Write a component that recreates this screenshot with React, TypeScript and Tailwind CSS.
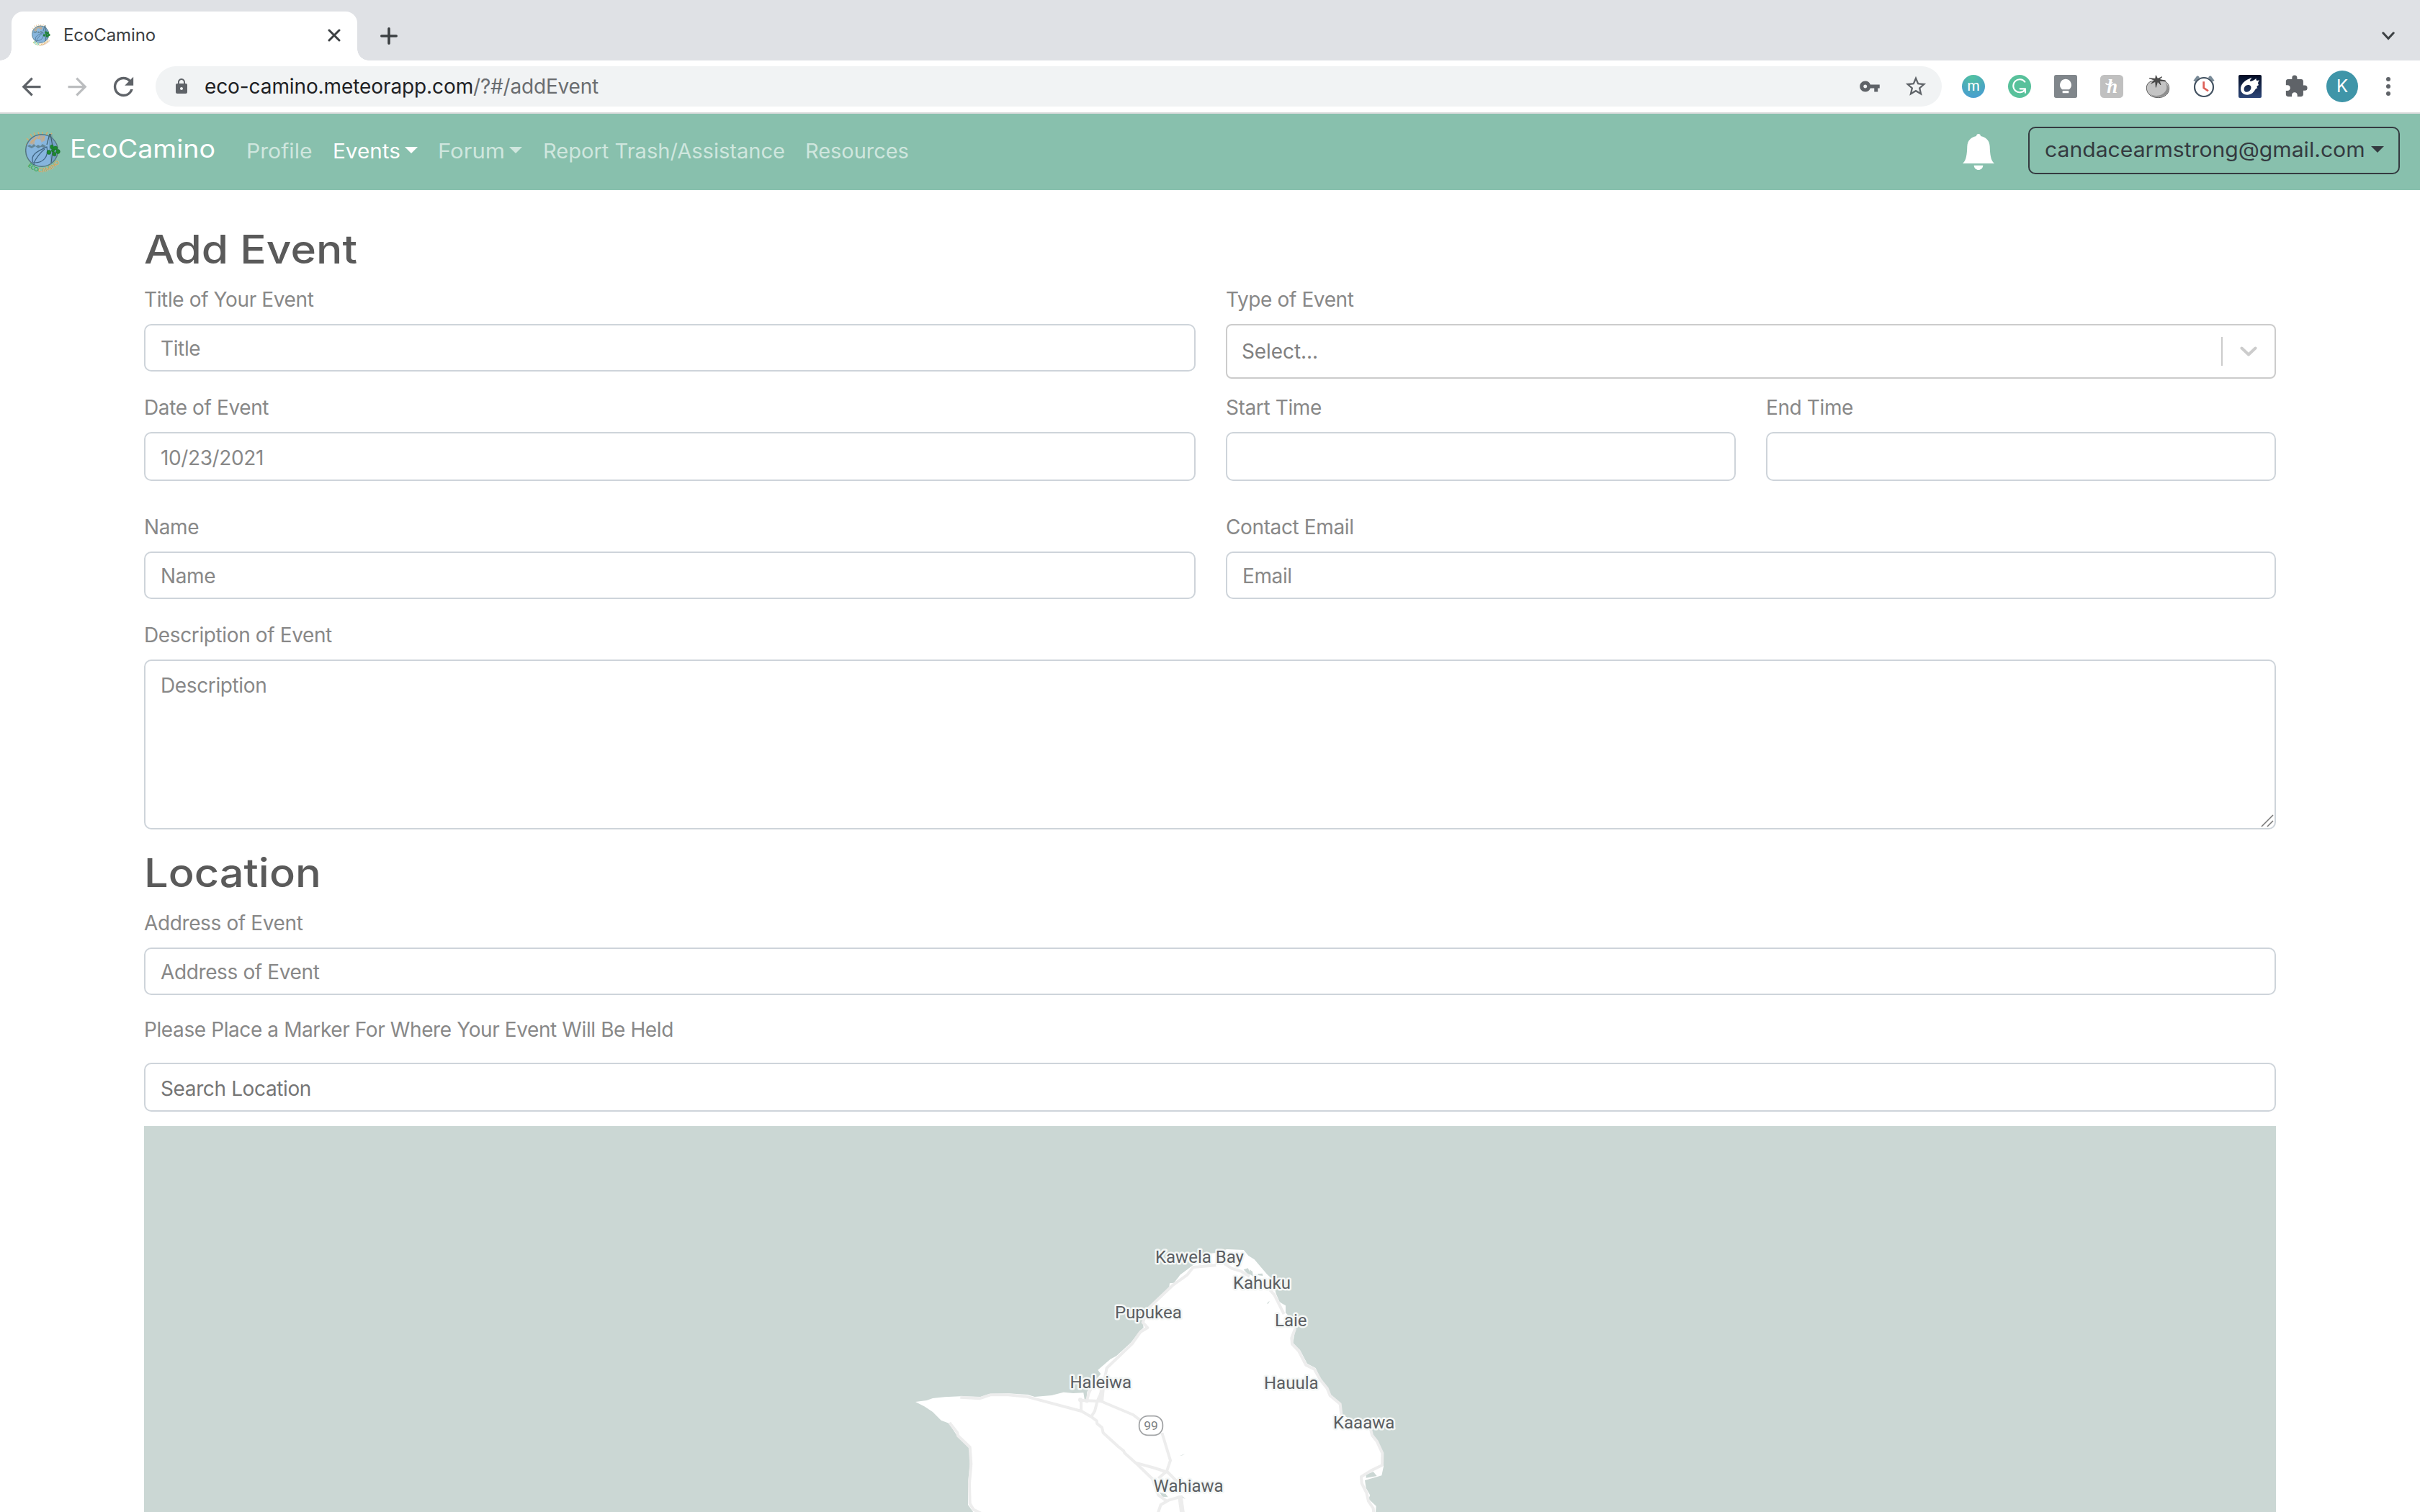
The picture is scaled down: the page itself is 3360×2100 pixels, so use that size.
import type { ReactNode } from "react";
import {
  MdArrowBack,
  MdArrowForward,
  MdExtension,
  MdLock,
  MdRefresh,
  MdStarBorder,
  MdVpnKey,
} from "react-icons/md";

function EcoLogo({ className, id }: { className: string; id: string }) {
  return (
    <svg viewBox="0 0 49 57" className={className}>
      <defs>
        <path id={id} d="M3 43 Q23 64 45 42" />
      </defs>
      <g stroke="#d9ab6c" strokeWidth="1.4">
        <path d="M4 19 L1 17 M6 13 L2 9 M10 8 L7 3 M14 6 L12 1 M19 4 L18 0 M24 4 L24 0 M29 4 L31 0 M34 6 L37 2" />
      </g>
      <circle cx="23" cy="26" r="22.3" fill="#86b5dd" stroke="#55777f" strokeWidth="1.5" />
      <path d="M5 17 Q10 5 24 5 Q28 6 28 12 L22 15 Q15 13 13 18 Z" fill="#b9ab9b" opacity=".85" />
      <path d="M8 15 L12 11 M12 16 L15 7 M18 12 L20 5 M24 11 L27 6" stroke="#d9ab6c" strokeWidth="1.2" />
      <circle cx="17.5" cy="15" r="5" fill="#8fbbe0" />
      <path
        d="M3 20 L6 18 L9 20 L12 17 L15 20 L18 18 L21 20 L24 17 L29 20 L26 22 L22 21 L18 23 L14 20 L9 23 Z"
        fill="#55777f"
        opacity=".75"
      />
      <path d="M33 3 L37 3 L45 26 L42 38 L36 44 L33 26 Z" fill="#5d86a8" opacity=".4" />
      <path d="M34 3 L30 18 M35 3 L38 20 M38 28 L36 43 M38 28 L42 34" stroke="#3f5f6b" strokeWidth="1.2" fill="none" />
      <path
        d="M11 43 C6 32 17 27 30 21 C33 36 24 43 13 43 M12 43 C16 35 20 30 27 24 M13 43 L11 46"
        stroke="#3f6482"
        strokeWidth="1.2"
        fill="none"
      />
      <g fill="#1c8a2c" stroke="#14651f" strokeWidth=".5">
        <ellipse cx="33" cy="28.5" rx="2.8" ry="3" />
        <ellipse cx="37" cy="21" rx="2.3" ry="3" />
        <ellipse cx="42" cy="22.5" rx="2.8" ry="2.6" />
        <ellipse cx="45.5" cy="27.5" rx="2.8" ry="3" />
        <ellipse cx="40.5" cy="31" rx="2.4" ry="2.8" />
        <ellipse cx="38.5" cy="26" rx="2.2" ry="2.2" />
      </g>
      <text fontFamily="Lato, sans-serif" fontWeight="700" fontSize="8" letterSpacing="-.3" dy="3">
        <textPath href={`#${id}`} startOffset="3">
          <tspan fill="#35a85b">ECO</tspan>
          <tspan fill="#d8a860">CAMINO</tspan>
        </textPath>
      </text>
    </svg>
  );
}

function TabStrip() {
  return (
    <div className="flex h-[84px] items-end bg-[#dfe1e5] pl-4">
      <div className="relative flex h-[68px] w-[480px] items-center rounded-t-2xl bg-white pb-[3px] pl-7 pr-[23px]">
        <i className="absolute -left-4 bottom-0 h-4 w-4 bg-[radial-gradient(circle_at_0_0,transparent_15.5px,white_16px)]" />
        <i className="absolute -right-4 bottom-0 h-4 w-4 bg-[radial-gradient(circle_at_100%_0,transparent_15.5px,white_16px)]" />
        <EcoLogo className="h-[30px] w-[26px]" id="tabLogoArc" />
        <span className="ml-[18px] mt-px flex-1 text-2xl leading-8 tracking-[-0.1px] text-[#3c4043]">EcoCamino</span>
        <svg viewBox="0 0 18 18" className="mt-px h-[18px] w-[18px]" stroke="#3c4043" strokeWidth="3" strokeLinecap="round">
          <path d="M2 2 L16 16 M16 2 L2 16" />
        </svg>
      </div>
      <svg viewBox="0 0 24 24" className="mb-[22px] ml-8 h-6 w-6" stroke="#3c4043" strokeWidth="3.6" strokeLinecap="round">
        <path d="M12 1.8 V22.2 M1.8 12 H22.2" />
      </svg>
      <svg
        viewBox="0 0 18 12"
        className="mb-7 ml-auto mr-[35px] h-3 w-[18px]"
        fill="none"
        stroke="#3c4043"
        strokeWidth="3"
        strokeLinecap="round"
      >
        <path d="M1.8 1.8 L9 9.5 L16.2 1.8" />
      </svg>
    </div>
  );
}

function Ext({ children }: { children: ReactNode }) {
  return (
    <svg viewBox="0 0 96 96" className="mr-8 h-8 w-8 overflow-visible">
      {children}
    </svg>
  );
}

function Extensions() {
  return (
    <>
      <Ext>
        <defs>
          <radialGradient id="mGrad" cx=".45" cy=".1" r=".9">
            <stop offset="0" stopColor="#52c2a0" />
            <stop offset=".6" stopColor="#4ba9bd" />
            <stop offset="1" stopColor="#489fd0" />
          </radialGradient>
        </defs>
        <circle cx="48" cy="48" r="48" fill="url(#mGrad)" />
        <text x="48" y="66" textAnchor="middle" fontFamily="Lato, sans-serif" fontSize="64" fill="#fff">
          m
        </text>
      </Ext>
      <Ext>
        <circle cx="48" cy="48" r="48" fill="#58c19b" />
        <path
          d="M70 29 A27 27 0 1 0 71 61 M50 58 H72 V74"
          fill="none"
          stroke="#fff"
          strokeWidth="6.5"
          strokeLinecap="round"
          strokeLinejoin="round"
        />
      </Ext>
      <Ext>
        <rect width="96" height="96" rx="8" fill="#80868b" />
        <path d="M48 17 A25 25 0 0 1 63 61 H33 A25 25 0 0 1 48 17 Z M35 66 H61 V76 H35 Z" fill="#fff" />
      </Ext>
      <Ext>
        <rect width="96" height="96" rx="16" fill="#c0c0c0" />
        <text
          x="50"
          y="74"
          textAnchor="middle"
          fontFamily="'Liberation Serif', serif"
          fontStyle="italic"
          fontWeight="700"
          fontSize="80"
          fill="#fff"
        >
          h
        </text>
        <path d="M24 36 Q30 46 50 32" fill="none" stroke="#fff" strokeWidth="5" strokeLinecap="round" />
      </Ext>
      <Ext>
        <path
          d="M1 54 C1 30 22 22 48 24 C78 22 95 32 95 56 C95 80 74 95 50 95 C22 95 1 80 1 54 Z"
          fill="#c4c4c4"
          stroke="#444"
          strokeWidth="2.5"
        />
        <path d="M10 74 C26 92 66 94 82 64 C88 52 84 40 78 32 C98 46 96 72 82 82 C60 98 28 96 10 74 Z" fill="#8e8e8e" />
        <path
          d="M40 2 L47 16 L66 8 L54 19 L80 24 L55 25 L60 42 L47 28 L40 52 L38 28 L20 36 L34 22 L12 14 L38 16 Z"
          fill="#4a4a4a"
          stroke="#333"
          strokeWidth="2"
        />
      </Ext>
      <Ext>
        <path
          d="M4 24 L18 5 Q22 2 25 5 L30 10 L12 28 Z M92 24 L78 5 Q74 2 71 5 L66 10 L84 28 Z"
          fill="#788a97"
        />
        <circle cx="48" cy="51" r="39" fill="#fff" stroke="#425160" strokeWidth="6.5" />
        <path d="M47 28 V54 L66 67" fill="none" stroke="#dd5f57" strokeWidth="8" />
      </Ext>
      <Ext>
        <defs>
          <linearGradient id="cometBg" x1="0" y1="0" x2="0" y2="1">
            <stop offset="0" stopColor="#020b24" />
            <stop offset="1" stopColor="#2c4678" />
          </linearGradient>
        </defs>
        <rect width="96" height="96" rx="6" fill="url(#cometBg)" />
        <path
          fillRule="evenodd"
          fill="#fff"
          d="M9 60 C8 38 26 22 56 11 C48 20 46 25 50 27 C58 26 68 20 74 14 C72 22 74 27 87 22 C80 32 80 38 85 42 C76 46 74 50 80 56 C70 54 70 66 58 76 C42 88 12 86 9 60 Z M40 42 C28 42 20 54 24 65 C29 76 46 72 51 60 C55 50 51 42 40 42 Z"
        />
      </Ext>
    </>
  );
}

function AddressBar() {
  return (
    <div className="flex h-[74px] items-center border-b-2 border-[#d9dadb] bg-white">
      <MdArrowBack className="ml-[24px] h-[39px] w-[39px] text-[#5f6368]" />
      <MdArrowForward className="ml-[25px] h-[39px] w-[39px] text-[#bbbdbf]" />
      <MdRefresh className="ml-[24px] h-[41px] w-[41px] text-[#5f6368]" />
      <div className="ml-[24px] flex h-14 w-[2480px] items-center rounded-full bg-[#f1f3f4] pl-6 pr-[19px]">
        <MdLock className="h-6 w-6 text-[#5f6368]" />
        <span className="ml-[20px] flex-1 whitespace-pre text-[28px] leading-9 tracking-[-0.1px] text-[#202124]">
          eco-camino.meteorapp.com<span className="tracking-[-0.2px] text-[#6a6d70]">/?#/addEvent</span>
        </span>
        <MdVpnKey className="mr-[32px] h-[30px] w-[30px] text-[#5f6368]" />
        <MdStarBorder className="h-[34px] w-[34px] text-[#5f6368]" />
      </div>
      <div className="ml-7 flex items-center">
        <Extensions />
        <MdExtension className="-ml-px h-[34px] w-[34px] text-[#5f6368]" />
        <span className="ml-[25px] flex h-11 w-11 items-center justify-center rounded-full bg-[#3f95a8] text-2xl text-white">
          K
        </span>
        <svg viewBox="0 0 6 26" className="ml-[39px] h-[26px] w-[6px]" fill="#5f6368">
          <circle cx="3" cy="3" r="3" />
          <circle cx="3" cy="13" r="3" />
          <circle cx="3" cy="23" r="3" />
        </svg>
      </div>
    </div>
  );
}

function Caret({ className }: { className: string }) {
  return <i className={`h-0 w-0 border-x-[9px] border-t-[9px] border-x-transparent border-t-current ${className}`} />;
}

function SiteNav() {
  return (
    <nav className="flex h-[106px] items-start bg-[#88c0ad] pl-[35px] pr-7 text-[28px] leading-[34px] text-[#cfe6de]">
      <EcoLogo className="mt-[25px] h-[57px] w-[49px]" id="navLogoArc" />
      <span className="ml-[13px] mt-[27px] w-[245px]">
        <span className="block origin-left scale-x-[1.075] text-[35px] leading-[42px] text-white">EcoCamino</span>
      </span>
      <div className="mt-[35px] flex whitespace-nowrap">
        <span className="w-[120px] origin-left scale-x-[1.077]">Profile</span>
        <span className="flex w-[146px] text-white">
          <span className="w-[100px] origin-left scale-x-[1.06]">Events</span>
          <Caret className="mt-[11px]" />
        </span>
        <span className="flex w-[146px]">
          <span className="w-[99px] origin-left scale-x-[1.11]">Forum</span>
          <Caret className="mt-[11px]" />
        </span>
        <span className="w-[364px] origin-left scale-x-[1.038]">Report Trash/Assistance</span>
        <span className="w-[150px] origin-left scale-x-[1.033]">Resources</span>
      </div>
      <svg viewBox="75 288 132 150" className="ml-auto mt-7 h-[50px] w-11" fill="#fff">
        <path d="M75 411 C90 400 93 372 94 340 C95 315 110 302 132 297 C132 285 150 285 150 297 C172 302 187 315 188 340 C189 372 192 400 207 411 Z M122 419 H160 C158 444 124 444 122 419 Z" />
      </svg>
      <button className="ml-[47px] mt-[18px] flex h-[66px] w-[516px] rounded-[10px] border-2 border-[#343a40] pl-[21px] pt-[13px] text-left text-[#343a40]">
        <span className="w-[453px] origin-left scale-x-[1.076]">candacearmstrong@gmail.com</span>
        <Caret className="mt-[12px]" />
      </button>
    </nav>
  );
}

function Field({ label, children }: { label: string; children: ReactNode }) {
  return (
    <div className="min-w-0 flex-1">
      <div className="mb-[14px] h-10 text-[28px] leading-10 tracking-[-0.38px]">{label}</div>
      {children}
    </div>
  );
}

function Row({ children }: { children: ReactNode }) {
  return <div className="grid grid-cols-[1460px_1458px] gap-[42px]">{children}</div>;
}

function Box({ text = "", tall = false }: { text?: string; tall?: boolean }) {
  return (
    <div
      className={`flex items-center rounded-[10px] border-2 border-[#ced4da] bg-white pl-[21px] text-[28px] leading-9 tracking-[-0.38px] ${
        tall ? "h-[68px] pt-[4px]" : "h-[66px] pt-[2px]"
      }`}
    >
      {text}
    </div>
  );
}

const PLACES: [string, number, number][] = [
  ["Kawela Bay", 1604, 1754],
  ["Kahuku", 1712, 1790],
  ["Pupukea", 1548, 1831],
  ["Laie", 1770, 1841.5],
  ["Haleiwa", 1485.5, 1928],
  ["Hauula", 1755, 1929],
  ["Kaaawa", 1851, 1984],
  ["Wahiawa", 1601.5, 2071.5],
];

function OahuMap() {
  return (
    <svg viewBox="200 1564 2960 536" className="mt-5 block h-[536px] w-full bg-[#cbd7d4]">
      <g transform="translate(1240 1700) scale(.33333)">
        <path
          fill="#fff"
          d="M93 741 L140 735 165 726 215 721 280 718 365 720 400 708 480 706 560 711 590 720 660 714 710 701 750 705 793 703 798 735 806 735 808 700 835 660 865 625 853 608 905 563 930 550 990 495 1030 443 1043 432 1040 405 1065 350 1150 262 1152 247 1170 245 1190 220 1195 212 1245 175 1300 125 1345 120 1390 105 1460 108 1480 132 1505 148 1558 210 1580 230 1595 290 1610 325 1635 340 1635 370 1660 395 1677 430 1672 460 1665 495 1695 525 1725 582 1760 600 1778 640 1810 680 1822 712 1865 748 1872 795 1990 860 1995 880 2015 900 2043 955 2043 1010 2035 1048 1965 1068 1970 1100 1987 1130 1980 1145 2012 1175 2010 1202 335 1202 312 1170 312 1080 320 1000 318 935 265 880 232 830 200 818 165 783 130 760 Z"
        />
        <path
          fill="#cbd7d4"
          d="M1970 1045 L2000 1032 2015 1050 1970 1058 Z M1460 190 L1478 184 1492 212 1476 208 Z M1485 190 L1497 198 1500 220 1488 210 Z M1518 208 L1538 206 1540 216 1522 214 Z M1558 330 L1568 320 1566 326 1560 334 Z M1110 1118 L1135 1124 1145 1138 1122 1136 Z M1198 1128 L1218 1146 1205 1140 Z M1193 966 L1216 958 1205 964 Z"
        />
        <g fill="none" stroke="#ededed" strokeWidth="12" strokeLinejoin="round">
          <path d="M365 1205 L335 1190 320 1165 318 1080 325 1000 320 930 270 882 268 870 235 828" />
          <path d="M280 722 L360 727 405 712 480 712 555 719 785 780 825 803 848 820 850 832 870 848 875 870 935 925 960 945 965 955 1010 995 1080 1062 1105 1130 1140 1155" />
          <path d="M783 780 V735 L865 738 1000 795 1030 818" />
          <path d="M825 803 L840 780 850 740 868 700 885 625 890 600 995 500 1030 450 1060 432 1040 410 1065 350 1165 255 1225 212 1250 180 1345 172" />
          <path d="M1380 165 L1410 185 1450 197 1485 218 M1570 275 L1588 295 1628 375" />
          <path d="M1675 435 L1660 475 1662 500 1690 530 1720 588 1755 605 1780 650 1808 685 1820 715 1862 750 1870 820" />
          <path d="M1988 850 L1995 880 2015 905 2038 955 2037 1005 1990 1028 1950 1053 1952 1080 1972 1120 1980 1155 2000 1185 2002 1205" />
          <path d="M1120 870 L1155 985 1140 1030 1105 1060 M1010 995 L1090 1017 1145 1035 1185 1075" />
          <path d="M1103 1205 L1115 1170 1150 1150 1195 1137" />
          <path d="M805 745 L815 705 835 665" />
          <path strokeWidth="20" d="M1195 1132 L1205 1205 M876 640 L866 740" />
        </g>
        <circle cx="780" cy="733" r="9" fill="#ededed" />
        <rect x="1025" y="800" width="98" height="80" rx="36" fill="#fff" stroke="#a3a5a7" strokeWidth="5.5" />
        <text x="1074" y="858" textAnchor="middle" fontFamily="Roboto, sans-serif" fontSize="52" fill="#7c7f82">
          99
        </text>
      </g>
      <g
        fontFamily="Roboto, sans-serif"
        fontSize="24"
        fill="#5b5e62"
        stroke="#f4f7f6"
        strokeWidth="5"
        strokeLinejoin="round"
        paintOrder="stroke"
      >
        {PLACES.map(([name, x, y]) => (
          <text key={name} x={x} y={y}>
            {name}
          </text>
        ))}
      </g>
    </svg>
  );
}

export default function App() {
  return (
    <div className="h-[2100px] w-[3360px] overflow-hidden bg-white font-['Inter',sans-serif]">
      <TabStrip />
      <AddressBar />
      <SiteNav />
      <main className="px-[200px] pt-[52px] text-[#888888]">
        <h1 className="mb-5 h-[60px] origin-left scale-x-[1.1] text-[55px] font-medium leading-[60px] text-[#5a5a5a]">
          Add Event
        </h1>
        <Row>
          <Field label="Title of Your Event">
            <Box text="Title" />
          </Field>
          <Field label="Type of Event">
            <div className="flex h-[76px] items-center rounded-[8px] border-2 border-[#cccccc] bg-white pl-[20px] pr-6 text-[28px] tracking-[-0.1px] text-[#808080]">
              <span className="flex-1">Select...</span>
              <i className="mr-6 h-10 w-[2px] bg-[#cccccc]" />
              <svg
                viewBox="0 0 24 14"
                className="h-[14px] w-6"
                fill="none"
                stroke="#cccccc"
                strokeWidth="4"
                strokeLinecap="round"
                strokeLinejoin="round"
              >
                <path d="M2.5 2.5 L12 11.5 L21.5 2.5" />
              </svg>
            </div>
          </Field>
        </Row>
        <div className="mt-5">
          <Row>
            <Field label="Date of Event">
              <Box text="10/23/2021" tall />
            </Field>
            <div className="flex gap-[42px]">
              <Field label="Start Time">
                <Box tall />
              </Field>
              <Field label="End Time">
                <Box tall />
              </Field>
            </div>
          </Row>
        </div>
        <div className="mt-11">
          <Row>
            <Field label="Name">
              <Box text="Name" />
            </Field>
            <Field label="Contact Email">
              <Box text="Email" />
            </Field>
          </Row>
        </div>
        <div className="mt-[30px]">
          <Field label="Description of Event">
            <div className="relative h-[236px] rounded-[10px] border-2 border-[#ced4da] bg-white pl-[21px] pt-[16px] text-[28px] leading-9 tracking-[-0.38px]">
              Description
              <svg viewBox="0 0 18 18" className="absolute bottom-[1px] right-[1px] h-[18px] w-[18px]" stroke="#777" strokeWidth="1.6">
                <path d="M1 17 L17 1 M9 17 L17 9" />
              </svg>
            </div>
          </Field>
        </div>
        <h2 className="mb-5 mt-[30px] h-[60px] origin-left scale-x-[1.084] text-[55px] font-medium leading-[60px] text-[#5a5a5a]">
          Location
        </h2>
        <Field label="Address of Event">
          <Box text="Address of Event" />
        </Field>
        <p className="mb-[26px] mt-7 h-10 text-[28px] leading-10 tracking-[-0.4px]">
          Please Place a Marker For Where Your Event Will Be Held
        </p>
        <div className="text-[#757575]">
          <Box text="Search Location" tall />
        </div>
        <OahuMap />
      </main>
    </div>
  );
}
